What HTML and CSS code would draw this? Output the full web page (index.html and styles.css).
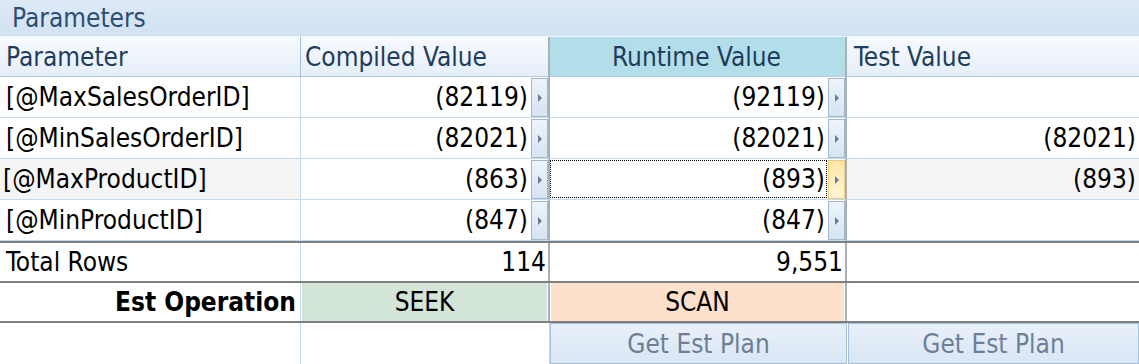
FILE: index.html
```html
<!DOCTYPE html>
<html lang="en">
<head>
  <meta charset="UTF-8" />
  <title>Parameters</title>
  <link rel="stylesheet" href="styles.css">
</head>
<body>

  <div class="panel">
    <div class="title">Parameters</div>

    <div class="row head">
      <div class="cell">Parameter</div>
      <div class="cell sep">Compiled Value</div>
      <div class="cell sep runtime">Runtime Value</div>
      <div class="cell">Test Value</div>
    </div>

    <div class="row">
      <div class="cell">[@MaxSalesOrderID]</div>
      <div class="cell sep val"><span>(82119)</span><i class="arrow"></i></div>
      <div class="cell sep val"><span>(92119)</span><i class="arrow"></i></div>
      <div class="cell val"></div>
    </div>

    <div class="row">
      <div class="cell">[@MinSalesOrderID]</div>
      <div class="cell sep val"><span>(82021)</span><i class="arrow"></i></div>
      <div class="cell sep val"><span>(82021)</span><i class="arrow"></i></div>
      <div class="cell val test">(82021)</div>
    </div>

    <div class="row current">
      <div class="cell name">[@MaxProductID]</div>
      <div class="cell sep val"><span>(863)</span><i class="arrow"></i></div>
      <div class="cell sep val"><span class="focus">(893)</span><i class="arrow hot"></i></div>
      <div class="cell val test">(893)</div>
    </div>

    <div class="row">
      <div class="cell">[@MinProductID]</div>
      <div class="cell sep val"><span>(847)</span><i class="arrow"></i></div>
      <div class="cell sep val"><span>(847)</span><i class="arrow"></i></div>
      <div class="cell val"></div>
    </div>

    <div class="row total">
      <div class="cell">Total Rows</div>
      <div class="cell sep num">114</div>
      <div class="cell sep num">9,551</div>
      <div class="cell"></div>
    </div>

    <div class="row total">
      <div class="cell label">Est Operation</div>
      <div class="cell sep op"><span class="seek">SEEK</span></div>
      <div class="cell sep op"><span class="scan">SCAN</span></div>
      <div class="cell"></div>
    </div>

    <div class="row total actions">
      <div class="cell"></div>
      <div class="cell"></div>
      <button class="plan">Get Est Plan</button>
      <button class="plan">Get Est Plan</button>
    </div>
  </div>

</body>
</html>
```

FILE: styles.css
```css
* { box-sizing: border-box; }
body {
  margin: 0;
  font-family: 'DejaVu Sans Condensed', 'DejaVu Sans', sans-serif;
  font-stretch: condensed;
  font-size: 26px;
  color: #000;
  background: #fff;
}

.panel {
  width: 1139px;
  height: 364px;
  overflow: hidden;
}

.title {
  height: 37px;
  line-height: 36px;
  padding-left: 12px;
  color: #2a4e74;
  background: linear-gradient(#dde9f6, #d2e2f2);
  border-bottom: 1px solid #eef4fb;
}

.row {
  display: grid;
  grid-template-columns: 301px 249px 297px 1fr;
  height: 41px;
}

.cell {
  display: flex;
  align-items: center;
  padding: 0 6px;
  border-right: 1px solid #c6daee;
  border-bottom: 1px solid #c6daee;
  white-space: nowrap;
  overflow: hidden;
}
.cell:last-child { border-right: none; }
.cell.sep { border-right: 2px solid #a8b0ba; }

.head { height: 40px; }
.head .cell {
  color: #1e3d5c;
  background: linear-gradient(#f7fafe, #e5eef9);
  border-bottom-color: #b7cbe0;
}
.head .cell:first-child { border-right-color: #a9bed3; }
.head .cell.sep { padding-left: 4px; }
.head .runtime {
  justify-content: center;
  background: #b2deea;
}
.head .cell:last-child { padding-left: 7px; }

.val {
  justify-content: flex-end;
  padding: 0;
}
.val span { padding-right: 3px; }
.val.test { padding-right: 3px; }

.arrow {
  position: relative;
  width: 17px;
  height: 39px;
  margin: 1px 0;
  border: 1px solid #a3b7cd;
  background: linear-gradient(#eef4fb, #d6e3f1);
}
.arrow::after {
  content: "";
  position: absolute;
  left: 6px;
  top: 15px;
  border-left: 4px solid #6b7b93;
  border-top: 4px solid transparent;
  border-bottom: 4px solid transparent;
}
.arrow.hot {
  border-color: #f0c878;
  background: linear-gradient(#fde7a6, #fff6d8);
}

.current .name {
  padding-left: 3px;
  background: #f5f5f5;
}
.current .test { background: #f5f5f5; }
.current .val span.focus {
  flex: 1;
  align-self: stretch;
  display: flex;
  align-items: center;
  justify-content: flex-end;
  margin: 1px 1px 1px 0;
  border: 1px dotted #000;
  padding-right: 1px;
}

.total {
  height: 40px;
  border-top: 2px solid #7f7f7f;
}
.total .cell { border-bottom: none; }
.num { justify-content: flex-end; padding-right: 2px; }
.label {
  justify-content: flex-end;
  font-weight: bold;
  padding-right: 4px;
}

.op { padding: 0; }
.op span {
  flex: 1;
  align-self: stretch;
  display: flex;
  align-items: center;
  justify-content: center;
  margin-left: 1px;
  border-right: 1px solid #fff;
}
.seek { background: #d3e5d7; }
.scan { background: #fde1cc; }

.actions { height: 41px; }
.plan {
  font: inherit;
  font-stretch: condensed;
  color: #6d7f97;
  height: 41px;
  margin: 0;
  border: 1px solid #a8bfd9;
  background: linear-gradient(#e8f0fa, #dae6f4);
}
.plan + .plan { margin-left: 1px; }
```
